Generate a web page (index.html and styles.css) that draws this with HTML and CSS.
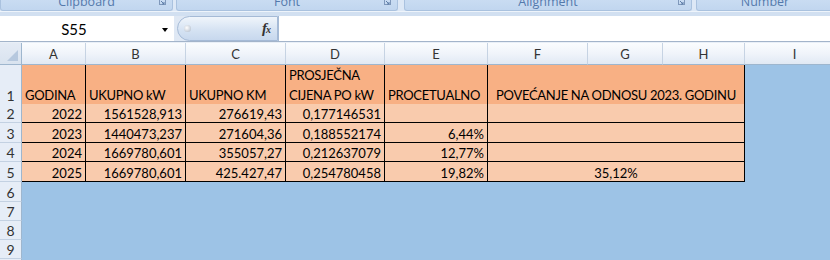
FILE: index.html
```html
<!DOCTYPE html>
<html>
<head>
<meta charset="utf-8">
<link rel="stylesheet" href="styles.css">
</head>
<body>
<div class="ribbon">
  <div class="grp g1"><span class="lbl">Clipboard</span><svg class="dl" width="7" height="7" viewBox="0 0 7 7"><rect x="0.5" y="-1.5" width="6" height="6" fill="none" stroke="#7f98bb"/><path d="M2 1 L5 4 M5 2 V4 H3" stroke="#5f7ea8" fill="none"/></svg></div>
  <div class="grp g2"><span class="lbl">Font</span><svg class="dl" width="7" height="7" viewBox="0 0 7 7"><rect x="0.5" y="-1.5" width="6" height="6" fill="none" stroke="#7f98bb"/><path d="M2 1 L5 4 M5 2 V4 H3" stroke="#5f7ea8" fill="none"/></svg></div>
  <div class="grp g3"><span class="lbl">Alignment</span><svg class="dl" width="7" height="7" viewBox="0 0 7 7"><rect x="0.5" y="-1.5" width="6" height="6" fill="none" stroke="#7f98bb"/><path d="M2 1 L5 4 M5 2 V4 H3" stroke="#5f7ea8" fill="none"/></svg></div>
  <div class="grp g4"><span class="lbl">Number</span></div>
</div>
<div class="band"></div>
<div class="fbar">
  <div class="namebox"><span class="name">S55</span><span class="arrow"></span></div>
  <div class="pill"><span class="knob"></span><span class="fx"><i>f</i><span class="fxx">x</span></span></div>
  <div class="input"></div>
</div>
<div class="gapline"></div>
<div class="sheet">
  <div class="row hdr">
    <div class="corner"><svg width="21" height="21" viewBox="0 0 21 21"><polygon points="18,7 18,18 7,18" fill="#b6c8de"/></svg></div>
    <div class="ch">A</div><div class="ch">B</div><div class="ch">C</div><div class="ch">D</div><div class="ch">E</div><div class="ch">F</div><div class="ch">G</div><div class="ch">H</div><div class="ch">I</div>
  </div>
  <div class="row r1">
    <div class="rh">1</div>
    <div class="c h one">GODINA</div>
    <div class="c h one">UKUPNO kW</div>
    <div class="c h one">UKUPNO KM</div>
    <div class="c h wrap"><span>PROSJEČNA<br>CIJENA PO kW</span></div>
    <div class="c h one">PROCETUALNO</div>
    <div class="c h one ctr span3">POVEĆANJE NA ODNOSU 2023. GODINU</div>
  </div>
  <div class="row r2">
    <div class="rh">2</div>
    <div class="c d r">2022</div>
    <div class="c d r">1561528,913</div>
    <div class="c d r">276619,43</div>
    <div class="c d r">0,177146531</div>
    <div class="c d r"></div>
    <div class="c d ctr span3"></div>
  </div>
  <div class="row r3">
    <div class="rh">3</div>
    <div class="c d r">2023</div>
    <div class="c d r">1440473,237</div>
    <div class="c d r">271604,36</div>
    <div class="c d r">0,188552174</div>
    <div class="c d r">6,44%</div>
    <div class="c d ctr span3"></div>
  </div>
  <div class="row r4">
    <div class="rh">4</div>
    <div class="c d r">2024</div>
    <div class="c d r">1669780,601</div>
    <div class="c d r">355057,27</div>
    <div class="c d r">0,212637079</div>
    <div class="c d r">12,77%</div>
    <div class="c d ctr span3"></div>
  </div>
  <div class="row r5">
    <div class="rh">5</div>
    <div class="c d r">2025</div>
    <div class="c d r">1669780,601</div>
    <div class="c d r">425.427,47</div>
    <div class="c d r">0,254780458</div>
    <div class="c d r">19,82%</div>
    <div class="c d ctr span3">35,12%</div>
  </div>
  <div class="row r6"><div class="rh">6</div></div>
  <div class="row r7"><div class="rh">7</div></div>
  <div class="row r8"><div class="rh">8</div></div>
  <div class="row r9"><div class="rh">9</div></div>
  <div class="row r10"><div class="rh">10</div></div>
</div>
</body>
</html>
```

FILE: styles.css
```css
* { box-sizing: border-box; }
html, body { margin: 0; padding: 0; }
body {
  width: 830px;
  height: 260px;
  overflow: hidden;
  background: #dbe6f4;
  font-family: Lato, "Open Sans", sans-serif;
  color: #000;
}

/* ribbon group labels (cut at top) */
.ribbon {
  display: flex;
  height: 11px;
  overflow: hidden;
  background: #dde8f6;
}
.grp {
  position: relative;
  height: 11px;
  background: linear-gradient(#c9dcf2, #c1d6ef);
  border: 1px solid #aac2df;
  border-top: none;
  border-radius: 0 0 3px 3px;
  overflow: hidden;
}
.g1 { width: 173px; }
.g2 { width: 222px; margin-left: 3px; }
.g3 { width: 288px; margin-left: 6px; }
.g4 { flex: 1; margin-left: 4px; margin-right: -4px; }
.lbl {
  display: block;
  font-family: "Open Sans", sans-serif;
  font-size: 12.5px;
  line-height: 12px;
  margin-top: -4px;
  text-align: center;
  color: #5479ac;
}
.dl { position: absolute; right: 6px; top: 0; }

.band {
  height: 5px;
  background: #d2e0f1;
  border-top: 1px solid #eef4fb;
}

/* formula bar */
.fbar {
  display: flex;
  height: 26px;
  border-bottom: 1px solid #a3b4ca;
  background: #dfe8f4;
}
.namebox {
  width: 174px;
  background: #fff;
  display: flex;
  align-items: center;
  position: relative;
}
.name {
  width: 148px;
  text-align: center;
  font-size: 15px;
  padding-top: 1px;
}
.arrow {
  position: absolute;
  left: 162px;
  top: 12px;
  width: 0;
  height: 0;
  border-left: 3.5px solid transparent;
  border-right: 3.5px solid transparent;
  border-top: 4px solid #000;
}
.pill {
  margin-left: 3px;
  width: 101px;
  height: 25px;
  border: 1px solid #a5bad6;
  border-radius: 13px 0 0 13px;
  background: linear-gradient(#f0f5fb, #d6e3f3 55%, #c7d8ee);
  display: flex;
  align-items: center;
}
.knob {
  width: 7px;
  height: 7px;
  margin-left: 6px;
  border-radius: 50%;
  background: radial-gradient(circle at 40% 40%, #fff, #aab6c6);
}
.fx {
  margin-left: auto;
  margin-right: 6px;
  font-family: "Liberation Serif", serif;
  color: #333;
  font-size: 15px;
  line-height: 15px;
}
.fx i { font-weight: bold; }
.fxx { font-size: 10px; font-style: italic; font-weight: bold; margin-left: -1px; }
.input {
  flex: 1;
  background: #fff;
  border-left: 1px solid #a5bad6;
}
.gapline { height: 1px; background: #e9eff7; }

/* sheet */
.sheet {
  width: 845px;
  background: #9dc3e6;
}
.row {
  display: grid;
  grid-template-columns: 22px 64px 100px 100px 99px 103px 100px 75px 82px 100px;
}
.hdr { height: 22px; }
.r1 { height: 39px; }
.r2, .r4, .r7, .r8, .r9 { height: 19px; }
.r3, .r5, .r6 { height: 20px; }
.r10 { height: 20px; }

.corner {
  background: linear-gradient(#e4ebf5, #d9e3ef);
  border-right: 1px solid #9eb6ce;
  border-bottom: 1px solid #9eb6ce;
}
.corner svg { display: block; }
.ch {
  background: linear-gradient(#fafcfe, #f0f4fa 50%, #e1e9f4);
  border-right: 1px solid #c6d3e3;
  border-bottom: 1px solid #9eb6ce;
  display: flex;
  align-items: flex-end;
  justify-content: center;
  font-size: 13px;
  line-height: 16px;
  padding-bottom: 2px;
  color: #333;
}
.rh {
  background: #e6edf7;
  border-right: 1px solid #9eb6ce;
  border-bottom: 1px solid #c3d1e2;
  display: flex;
  align-items: flex-end;
  justify-content: center;
  font-size: 14px;
  line-height: 16px;
  color: #333;
}
.c {
  border-right: 1px solid #000;
  border-bottom: 1px solid #000;
  padding: 0 3px;
  display: flex;
  align-items: flex-end;
  font-size: 13px;
  line-height: 16px;
  white-space: nowrap;
}
.h { background: #f8b084; letter-spacing: -0.3px; }
.d { background: #f9cbad; }
.one { padding-bottom: 1px; }
.wrap { line-height: 20px; }
.wrap span { display: block; margin-bottom: -1px; }
.r { justify-content: flex-end; }
.ctr { justify-content: center; }
.span3 { grid-column: span 3; }
```
